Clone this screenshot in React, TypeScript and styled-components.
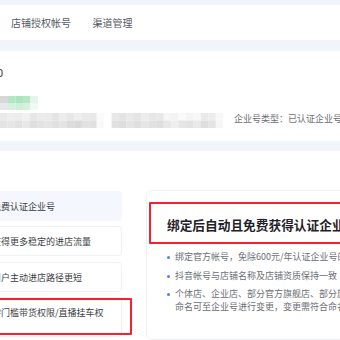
import React from "react";
import styled, { createGlobalStyle } from "styled-components";

const Global = createGlobalStyle`
  html, body { margin: 0; padding: 0; background: #ffffff; }
  body { font-family: "Noto Sans CJK SC", "Noto Sans", sans-serif; }
`;

const Page = styled.div`
  width: 340px;
  height: 340px;
  overflow: hidden;
  background: #f1f5fb;
  display: flex;
  flex-direction: column;
`;

const TabBar = styled.div`
  margin-top: 5px;
  height: 35px;
  flex: none;
  background: #ffffff;
  display: flex;
  align-items: center;
  padding-left: 11px;
  gap: 21.5px;
`;

const Tab = styled.span`
  font-size: 10px;
  line-height: 12px;
  color: #555a63;
`;

const InfoPanel = styled.div`
  margin-top: 11px;
  height: 90px;
  flex: none;
  background: #ffffff;
  padding-top: 15px;
  box-sizing: border-box;
  display: flex;
  flex-direction: column;
`;

const Zero = styled.div`
  margin-left: -3px;
  font-size: 11px;
  line-height: 12px;
  color: #333;
`;

const MosaicOne = styled.svg`
  display: block;
  margin-top: 18px;
`;

const InfoRow = styled.div`
  margin-top: 3px;
  display: flex;
  align-items: center;
  height: 15px;
`;

const TypeText = styled.span`
  margin-left: 11px;
  margin-top: -3px;
  font-size: 9px;
  line-height: 12px;
  color: #6b6f76;
  white-space: nowrap;
`;

const Main = styled.div`
  margin-top: 10px;
  flex: 1;
  background: #ffffff;
  display: flex;
  padding-top: 40px;
  margin-left: -20px;
`;

const Column = styled.div`
  width: 142px;
  flex: none;
  display: flex;
  flex-direction: column;
  gap: 5.3px;
`;

const Card = styled.div<{ $active?: boolean; $tall?: boolean }>`
  position: relative;
  box-sizing: border-box;
  height: ${(p) => (p.$tall ? "40px" : "30px")};
  padding: 9px 0 0 11px;
  border-radius: 4px;
  border: 1px solid ${(p) => (p.$active ? "#f4f7fe" : "#f0f1f3")};
  background: ${(p) => (p.$active ? "#f4f7fe" : "#ffffff")};
  font-size: 9px;
  line-height: 11px;
  color: #3a3d42;
  white-space: nowrap;
`;

const RedOutline = styled.div<{ $top: number; $left: number; $w: number; $h: number }>`
  position: absolute;
  top: ${(p) => p.$top}px;
  left: ${(p) => p.$left}px;
  width: ${(p) => p.$w}px;
  height: ${(p) => p.$h}px;
  box-sizing: border-box;
  border: 2px solid #f5222d;
  border-radius: 1px;
  pointer-events: none;
`;

const Panel = styled.div`
  position: relative;
  margin-left: 24px;
  margin-top: -1px;
  flex: none;
  width: 300px;
  box-sizing: border-box;
  border: 1px solid #eff0f2;
  border-radius: 6px;
  padding: 26px 0 0 20px;
`;

const Title = styled.div`
  font-size: 12.7px;
  line-height: 16px;
  font-weight: 700;
  color: #1f2329;
  white-space: nowrap;
  margin-bottom: 18px;
`;

const List = styled.ul`
  list-style: none;
  margin: 0;
  padding: 0;
  display: flex;
  flex-direction: column;
  gap: 6.3px;
`;

const Item = styled.li`
  display: flex;
  align-items: flex-start;
  gap: 5px;
  font-size: 9px;
  line-height: 12.4px;
  color: #6b6f76;
  white-space: nowrap;
`;

const Dot = styled.span`
  flex: none;
  width: 3px;
  height: 3px;
  border-radius: 50%;
  background: #4d7ef7;
  margin-top: 5px;
`;

const row1 = [
  ["#d6d7d8", "#b3e6c3", "#aee3c0", "#b6e7c5", "#e4f6e9"],
  ["#e7e8e9", "#d3f1dc", "#cdeed7", "#d6f1de", "#f0faf2"],
];

const row2top = [
  "#e9e9ea", "#eeeeee", "#ececec", "#f1f1f1", "#e6e6e6", "#ebebeb", "#eaeaea",
  "#e4e4e4", "#ececec", "#e7e7e7", "#eeeeee", "#e9e9e9", "#e8e8e8", "#fbfbfb",
  "#ffffff", "#e8e8e9", "#e3e3e4", "#e9e9e9", "#e4e4e4", "#ececec", "#e6e6e6",
  "#e8e8e8", "#f6f6f6", "#f3f3f3", "#fafafa", "#f4f4f4", "#f7f7f7", "#e9e9e9",
  "#ececec", "#f8f8f8",
];
const row2bot = [
  "#e3e3e4", "#e6e6e6", "#e1e1e1", "#e8e8e8", "#dedede", "#e2e2e2", "#e5e5e5",
  "#e0e0e0", "#e4e4e4", "#dcdcdc", "#d9d9da", "#e2e2e2", "#e0e0e0", "#f9f9f9",
  "#ffffff", "#e1e1e2", "#dddddd", "#e4e4e4", "#dfdfdf", "#e6e6e6", "#e1e1e1",
  "#dedede", "#e7e7e7", "#eeeeee", "#e5e5e5", "#e2e2e2", "#e9e9e9", "#dedede",
  "#e4e4e4", "#f6f6f6",
];

const MosaicTop = () => (
  <MosaicOne width="38" height="14" viewBox="0 0 38 14">
    {row1.map((r, j) =>
      r.map((c, i) => (
        <rect key={`${j}-${i}`} x={i === 0 ? 0 : 8 + (i - 1) * 7.5} y={j * 7} width={i === 0 ? 8 : 7.5} height="7" fill={c} />
      ))
    )}
  </MosaicOne>
);

const MosaicRow = () => (
  <svg width="223" height="15" viewBox="0 0 223 15" style={{ display: "block", flex: "none" }}>
    {row2top.map((c, i) => (
      <rect key={`t${i}`} x={i * 7.44} y="0" width="7.5" height="7.5" fill={c} />
    ))}
    {row2bot.map((c, i) => (
      <rect key={`b${i}`} x={i * 7.44} y="7.5" width="7.5" height="7.5" fill={c} />
    ))}
  </svg>
);

export default function App() {
  return (
    <>
      <Global />
      <Page>
        <TabBar>
          <Tab>店铺授权帐号</Tab>
          <Tab>渠道管理</Tab>
        </TabBar>
        <InfoPanel>
          <Zero>0</Zero>
          <MosaicTop />
          <InfoRow>
            <MosaicRow />
            <TypeText>企业号类型：已认证企业号</TypeText>
          </InfoRow>
        </InfoPanel>
        <Main>
          <Column>
            <Card $active>免费认证企业号</Card>
            <Card>获得更多稳定的进店流量</Card>
            <Card>用户主动进店路径更短</Card>
            <Card $tall>
              零门槛带货权限/直播挂车权
              <RedOutline $top={0} $left={-2} $w={153} $h={37} />
            </Card>
          </Column>
          <Panel>
            <RedOutline $top={11} $left={2} $w={260} $h={42} />
            <Title>绑定后自动且免费获得认证企业号</Title>
            <List>
              <Item>
                <Dot />
                <span>绑定官方帐号，免除600元/年认证企业号的费用</span>
              </Item>
              <Item>
                <Dot />
                <span>抖音帐号与店铺名称及店铺资质保持一致</span>
              </Item>
              <Item>
                <Dot />
                <span>
                  个体店、企业店、部分官方旗舰店、部分旗舰店
                  <br />
                  命名可至企业号进行变更，变更需符合命名规范
                </span>
              </Item>
            </List>
          </Panel>
        </Main>
      </Page>
    </>
  );
}
